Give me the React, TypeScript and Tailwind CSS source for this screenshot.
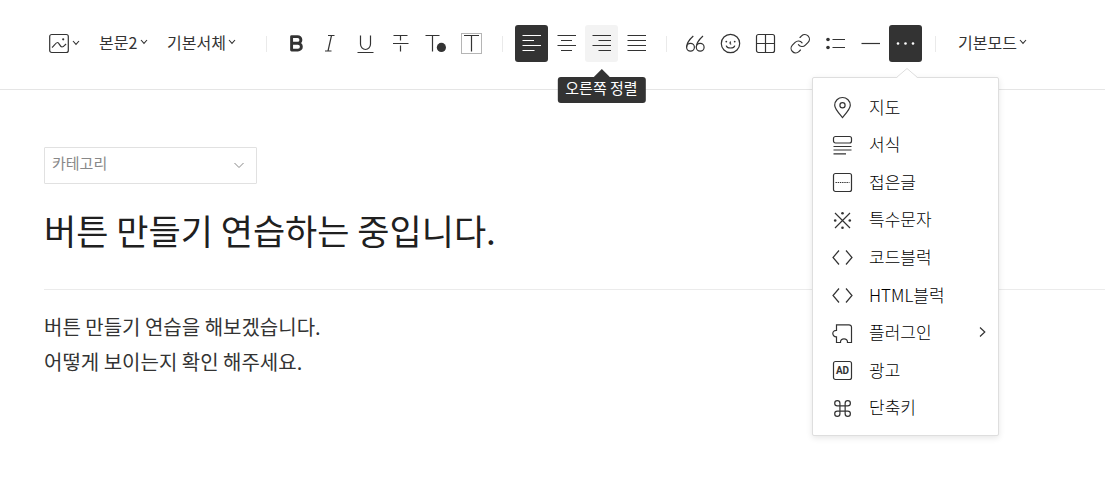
import type { ReactNode } from "react";
import clsx from "clsx";

type IconProps = { children: ReactNode };

const Icon = ({ children }: IconProps) => (
  <svg
    width="21"
    height="21"
    viewBox="0 0 21 21"
    fill="none"
    stroke="currentColor"
    strokeWidth="1.2"
    className="shrink-0 overflow-visible"
    aria-hidden="true"
  >
    {children}
  </svg>
);

const Chevron = ({ className }: { className?: string }) => (
  <svg
    width="8"
    height="6"
    viewBox="0 0 8 6"
    fill="none"
    stroke="currentColor"
    className={clsx("shrink-0", className)}
    aria-hidden="true"
  >
    <path d="M1 1l3 3.4L7 1" strokeWidth="1.1" />
  </svg>
);

const textTools = [
  {
    label: "굵게",
    icon: (
      <path
        d="M6.6 3.6h6a3.3 3.3 0 0 1 0 6.6h-6zM6.6 10.2h6.3a3.4 3.4 0 0 1 0 6.9H6.6z"
        strokeWidth="2.9"
        strokeLinejoin="round"
      />
    ),
  },
  { label: "기울임", icon: <path d="M8 2.5h6.5M5 18h6.5M11.5 2.5L8 18" /> },
  {
    label: "밑줄",
    icon: <path d="M5.5 2.5v8.5a5 5.5 0 0 0 10 0V2.5M2.5 19.5h16" />,
  },
  {
    label: "취소선",
    icon: <path d="M3.5 2.5h14M10.5 2.5v5M3 10.5h15.5M10.5 12.5v6" />,
  },
  {
    label: "글자색",
    icon: (
      <>
        <path d="M.5 2.5h14M7.5 2.5v16" />
        <circle cx="16.4" cy="14.4" r="4.6" fill="currentColor" stroke="none" />
      </>
    ),
  },
  {
    label: "배경색",
    icon: (
      <>
        <rect x="1.5" y=".5" width="20" height="20" stroke="#b5b5b5" strokeWidth="1" />
        <path d="M4 2.5h15M11.5 2.5v16" />
      </>
    ),
  },
];

const alignTools = [
  { label: "왼쪽 정렬", icon: <path d="M1.5 2.5H20M1.5 7.5H13M1.5 12.5H20M1.5 17.5h12" />, active: true },
  { label: "가운데 정렬", icon: <path d="M1.5 2.5H20M5 7.5h11M1.5 12.5H20M5 17.5h11" /> },
  { label: "오른쪽 정렬", icon: <path d="M1.5 2.5H20M7.5 7.5H20M1.5 12.5H20M7.5 17.5H20" />, hover: true },
  { label: "양쪽 정렬", icon: <path d="M1.5 2.5H20M1.5 7.5H20M1.5 12.5H20M1.5 17.5H20" /> },
];

const insertTools = [
  {
    label: "인용구",
    icon: (
      <>
        <circle cx="5.5" cy="14.3" r="3.9" />
        <circle cx="15.2" cy="14.3" r="3.9" />
        <path d="M8.3 3C5.5 5.5 1.6 10 1.6 14.3M18 3c-2.8 2.5-6.7 7-6.7 11.3" />
      </>
    ),
  },
  {
    label: "이모티콘",
    icon: (
      <>
        <circle cx="10.5" cy="10.5" r="9.2" />
        <path d="M6.2 12.6c.8 3.2 7.8 3.2 8.6 0M11 8.8c-1.3.2-1.4 2.4.2 2.4" />
        <circle cx="6.3" cy="8.6" r=".9" fill="currentColor" stroke="none" />
        <circle cx="14.7" cy="8.6" r=".9" fill="currentColor" stroke="none" />
      </>
    ),
  },
  {
    label: "표",
    icon: (
      <>
        <rect x="1.5" y="1.5" width="18" height="18" rx="2" />
        <path d="M10.5 1.5v18M1.5 10.5h18" />
      </>
    ),
  },
  {
    label: "링크",
    icon: (
      <g transform="translate(-.8 -.3) scale(.92)" strokeWidth="1.3" strokeLinecap="round">
        <path d="M10 13a5 5 0 0 0 7.54.54l3-3a5 5 0 0 0-7.07-7.07l-1.72 1.71" />
        <path d="M14 11a5 5 0 0 0-7.54-.54l-3 3a5 5 0 0 0 7.07 7.07l1.71-1.71" />
      </g>
    ),
  },
  {
    label: "목록",
    icon: (
      <>
        <circle cx="3" cy="6.5" r="1.8" fill="currentColor" stroke="none" />
        <circle cx="3" cy="14.5" r="1.8" fill="currentColor" stroke="none" />
        <path d="M7.5 6.5H20M7.5 14.5H20" />
      </>
    ),
  },
  { label: "구분선", icon: <path d="M1.5 10.5H20" /> },
];

const codeIcon = <path d="M7 3.5l-6 7 6 7M14 3.5l6 7-6 7" />;

const moreItems = [
  {
    label: "지도",
    icon: (
      <>
        <path d="M10.5 20.5C7 16.5 2.7 12 2.7 8.3a7.8 7.8 0 0 1 15.6 0C18.3 12 14 16.5 10.5 20.5z" />
        <circle cx="10.5" cy="8.3" r="2.6" />
      </>
    ),
  },
  {
    label: "서식",
    icon: (
      <>
        <rect x="1.5" y="1.5" width="18" height="6.5" rx="2" />
        <path d="M1.5 11.5h18M1.5 15h18M1.5 18.8H14" />
      </>
    ),
  },
  {
    label: "접은글",
    icon: (
      <>
        <rect x="1.5" y="1.5" width="18" height="18" rx="2" />
        <path d="M3.5 10.5h14" strokeDasharray="1.4 .8" />
      </>
    ),
  },
  {
    label: "특수문자",
    icon: (
      <>
        <path d="M3 3l15 15M18 3L3 18" />
        <g fill="currentColor" stroke="none">
          <circle cx="10.5" cy="3.2" r="1.3" />
          <circle cx="10.5" cy="17.8" r="1.3" />
          <circle cx="3.2" cy="10.5" r="1.3" />
          <circle cx="17.8" cy="10.5" r="1.3" />
        </g>
      </>
    ),
  },
  { label: "코드블럭", icon: codeIcon },
  { label: "HTML블럭", icon: codeIcon },
  {
    label: "플러그인",
    icon: (
      <path d="M4.5 1.8H17a2.5 2.5 0 0 1 2.5 2.5v15.2h-4c.3-2.5-1.5-3.7-3.5-3.7s-3.8 1.2-3.5 3.7h-4v-5.7C2.5 14 .8 12.5.8 10.5s1.7-3.3 3.7-3.2z" />
    ),
    submenu: true,
  },
  {
    label: "광고",
    icon: (
      <>
        <rect x="1.5" y="1.5" width="18" height="18" rx="2" />
        <text
          x="10.5"
          y="14"
          textAnchor="middle"
          fill="currentColor"
          stroke="none"
          className="font-[Roboto,sans-serif] text-[10px] font-bold"
        >
          AD
        </text>
      </>
    ),
  },
  {
    label: "단축키",
    icon: (
      <path
        transform="translate(.1 .1) scale(.87)"
        strokeWidth="1.4"
        d="M15 6v12a3 3 0 1 0 3-3H6a3 3 0 1 0 3 3V6a3 3 0 1 0-3 3h12a3 3 0 1 0-3-3"
      />
    ),
  },
];

type ToolButtonProps = {
  label: string;
  icon: ReactNode;
  active?: boolean;
  hover?: boolean;
};

const ToolButton = ({ label, icon, active, hover }: ToolButtonProps) => (
  <button
    type="button"
    aria-label={label}
    className={clsx(
      "flex h-[37px] w-[33px] items-center justify-center rounded-[3px]",
      active && "bg-[#333] text-white",
      hover && "bg-[#f3f3f3]"
    )}
  >
    <Icon>{icon}</Icon>
  </button>
);

const Tooltip = ({ children }: { children: ReactNode }) => (
  <div
    role="tooltip"
    className="absolute top-[52px] left-1/2 z-10 -translate-x-1/2 rounded-[3px] bg-[#333] px-2 pb-1 text-[15px] leading-[22px] whitespace-nowrap text-white"
  >
    <svg
      width="16"
      height="8"
      viewBox="0 0 16 8"
      className="absolute -top-2 left-1/2 -translate-x-1/2"
      aria-hidden="true"
    >
      <path d="M0 8l8-8 8 8z" fill="#333" />
    </svg>
    {children}
  </div>
);

const Separator = () => <span className="mr-3 ml-[13px] h-4 w-px bg-[#eaeaea]" />;

const ToolbarSelect = ({ label, value }: { label: string; value: string }) => (
  <div className="relative flex items-center pb-1">
    <select
      aria-label={label}
      defaultValue={value}
      className="appearance-none bg-transparent pr-[10px] text-base leading-6 outline-none"
    >
      <option>{value}</option>
    </select>
    <Chevron className="pointer-events-none absolute right-0" />
  </div>
);

const MoreMenu = () => (
  <div className="absolute top-[52px] -left-[77px] z-10 w-[187px] rounded-[2px] border border-[#dedede] bg-white pt-[11px] pb-2 shadow-[0_2px_6px_rgba(0,0,0,0.1)]">
    <svg
      width="22"
      height="11"
      viewBox="0 0 22 11"
      className="absolute -top-[10px] left-[83px]"
      aria-hidden="true"
    >
      <path d="M0 10.5L11 .5l11 10z" fill="#fff" />
      <path d="M.5 9.5L11 .5l10.5 9" fill="none" stroke="#dedede" />
    </svg>
    <ul className="grid h-[338px] auto-rows-fr">
      {moreItems.map((item) => (
        <li key={item.label} className="flex">
          <button type="button" className="flex flex-1 items-center gap-4 pr-3 pl-[19px] text-left">
            <Icon>{item.icon}</Icon>
            <span className="flex-1 pb-0.5 text-[17px] leading-6 font-light text-black">{item.label}</span>
            {item.submenu && (
              <svg width="7" height="12" viewBox="0 0 7 12" fill="none" stroke="currentColor" className="mb-0.5" aria-hidden="true">
                <path d="M1 1.5L5.8 6 1 10.5" strokeWidth="1.2" />
              </svg>
            )}
          </button>
        </li>
      ))}
    </ul>
  </div>
);

const Toolbar = () => (
  <header className="border-b border-[#e5e5e5] pt-[25px] pb-[27px] pl-11">
    <div role="toolbar" aria-label="편집 도구" className="flex h-[37px] items-center">
      <div className="flex items-center gap-[19px] pr-[17px] pl-[5px]">
        <button type="button" aria-label="사진 첨부" className="flex items-center gap-0.5">
          <Icon>
            <rect x=".7" y="1.5" width="18.6" height="18" rx="2" />
            <path d="M3 14.5c2-1.5 3.8-5 5.5-5s2.5 4.5 4.5 4.5c1.5 0 2.5-1.5 4-3" />
            <circle cx="14.2" cy="6.3" r="1.1" fill="currentColor" stroke="none" />
          </Icon>
          <Chevron className="mb-0.5" />
        </button>
        <ToolbarSelect label="문단 스타일" value="본문2" />
        <ToolbarSelect label="글꼴" value="기본서체" />
      </div>
      <Separator />
      <div className="flex gap-0.5 pr-0.5">
        {textTools.map((tool) => (
          <ToolButton key={tool.label} {...tool} />
        ))}
      </div>
      <Separator />
      <div className="flex gap-0.5">
        {alignTools.map((tool) => (
          <div key={tool.label} className="relative">
            <ToolButton {...tool} />
            {tool.hover && <Tooltip>{tool.label}</Tooltip>}
          </div>
        ))}
      </div>
      <Separator />
      <div className="flex gap-0.5">
        {insertTools.map((tool) => (
          <ToolButton key={tool.label} {...tool} />
        ))}
        <div className="relative">
          <ToolButton
            label="더보기"
            active
            icon={
              <g fill="currentColor" stroke="none">
                <circle cx="3" cy="10.5" r="1.3" />
                <circle cx="10.5" cy="10.5" r="1.3" />
                <circle cx="18" cy="10.5" r="1.3" />
              </g>
            }
          />
          <MoreMenu />
        </div>
      </div>
      <Separator />
      <div className="pl-[10px]">
        <ToolbarSelect label="편집 모드" value="기본모드" />
      </div>
    </div>
  </header>
);

const App = () => {
  return (
    <div className="min-h-screen bg-white font-['Noto_Sans_CJK_KR',sans-serif] text-[#333]">
      <Toolbar />
      <main className="pt-[57px] pl-11">
        <div className="relative flex w-[213px] items-center text-[#888]">
          <select
            aria-label="카테고리"
            className="h-[37px] w-full appearance-none rounded-[1px] border border-[#e1e1e1] bg-white px-[7px] pb-1 text-[15px] outline-none"
          >
            <option>카테고리</option>
          </select>
          <svg
            width="10"
            height="7"
            viewBox="0 0 10 7"
            fill="none"
            stroke="currentColor"
            className="pointer-events-none absolute right-[13px]"
            aria-hidden="true"
          >
            <path d="M.5 1L5 5.5 9.5 1" />
          </svg>
        </div>
        <div className="border-b border-[#ebebeb] pt-[21px] pb-[34px]">
          <input
            aria-label="제목"
            defaultValue="버튼 만들기 연습하는 중입니다."
            className="block h-[50px] w-full text-[35px] text-[#202020] outline-none"
          />
        </div>
        <textarea
          aria-label="내용"
          rows={2}
          defaultValue={"버튼 만들기 연습을 해보겠습니다.\n어떻게 보이는지 확인 해주세요."}
          className="mt-[19px] block w-full resize-none text-xl leading-[35px] outline-none"
        />
      </main>
    </div>
  );
};

export default App;
